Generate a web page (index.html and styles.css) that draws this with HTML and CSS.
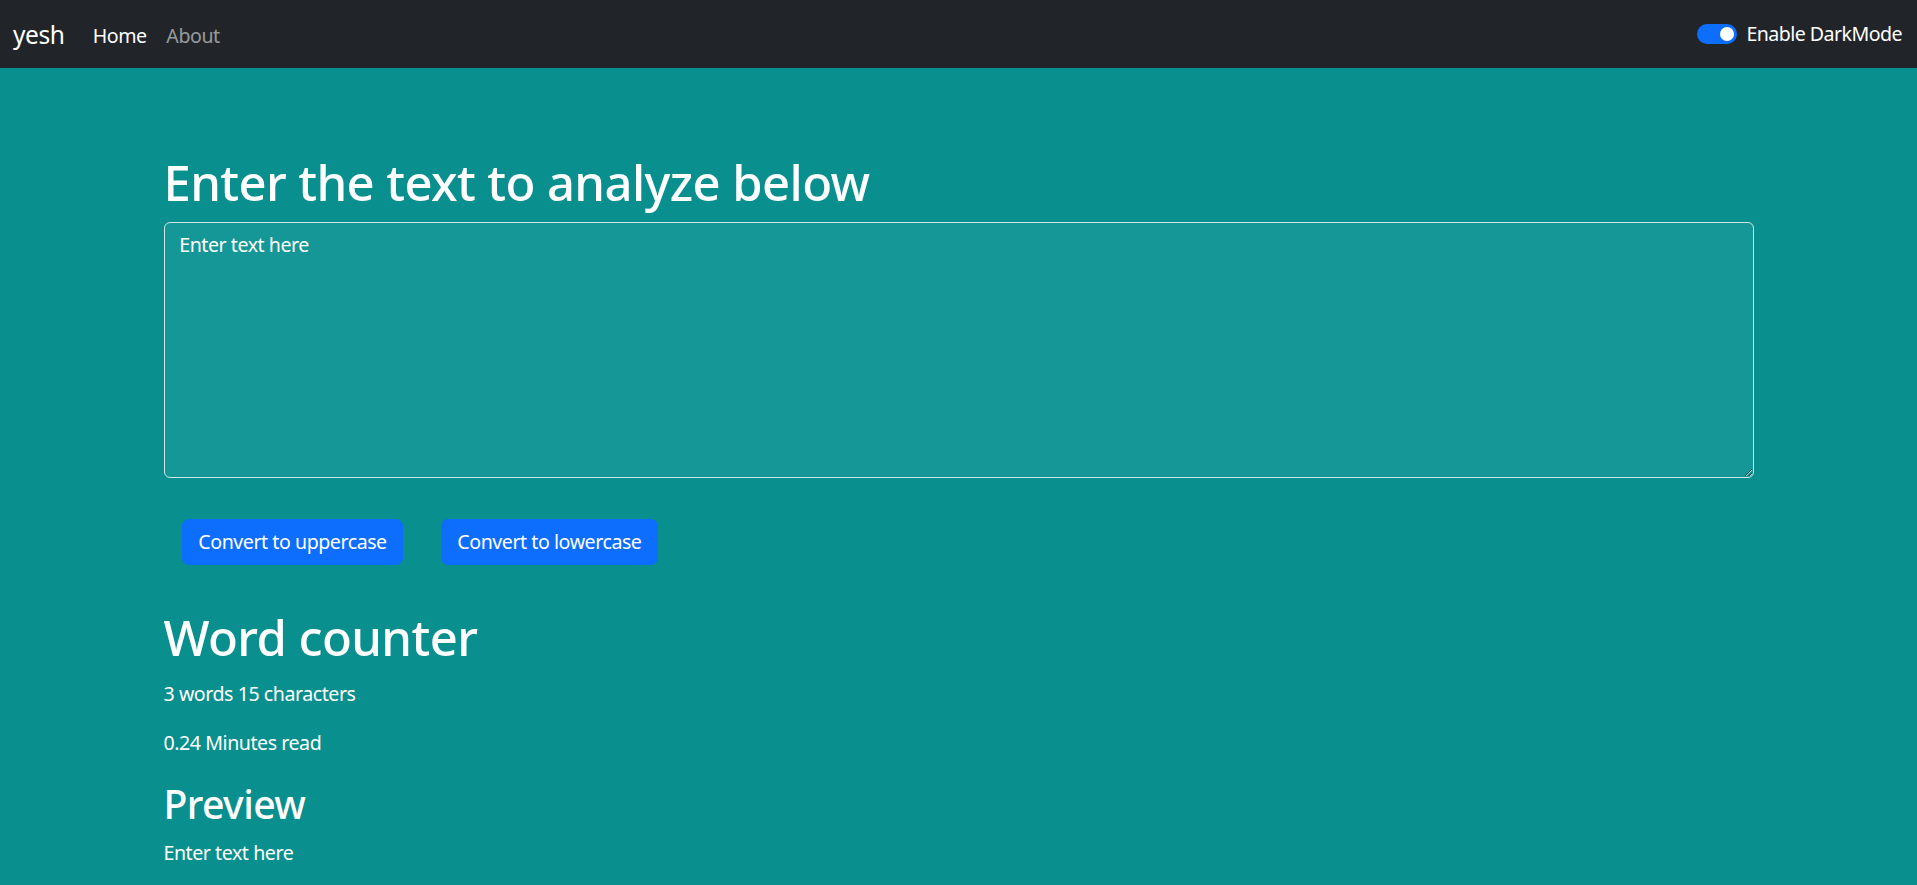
FILE: index.html
```html
<!DOCTYPE html>
<html lang="en">
<head>
<meta charset="utf-8">
<title>TextUtils</title>
<link rel="stylesheet" href="styles.css">
</head>
<body>
<nav class="navbar">
  <div class="nav-left">
    <a class="brand" href="#">yesh</a>
    <a class="nav-link active" href="#">Home</a>
    <a class="nav-link" href="#">About</a>
  </div>
  <div class="switch">
    <span class="switch-track"><span class="switch-knob"></span></span>
    <label class="switch-label">Enable DarkMode</label>
  </div>
</nav>
<main class="container">
  <h1 class="title">Enter the text to analyze below</h1>
  <textarea class="text-box" placeholder="Enter text here"></textarea>
  <div class="actions">
    <button class="btn">Convert to uppercase</button>
    <button class="btn">Convert to lowercase</button>
  </div>
  <section class="summary">
    <h1 class="title title-sm">Word counter</h1>
    <p class="stat">3 words 15 characters</p>
    <p class="stat">0.24 Minutes read</p>
    <h2 class="subtitle">Preview</h2>
    <p class="stat">Enter text here</p>
  </section>
</main>
</body>
</html>
```
FILE: styles.css
```css
* { box-sizing: border-box; }
html, body { margin: 0; padding: 0; }
body {
  background: #0a8f8f;
  color: #fff;
  font-family: "Noto Sans", "Open Sans", sans-serif;
  font-size: 19.6px;
  line-height: 1.5;
  letter-spacing: -0.45px;
}
.navbar {
  height: 68px;
  background: #212529;
  display: flex;
  align-items: center;
  justify-content: space-between;
  padding: 0 15px;
}
.nav-left { display: flex; align-items: center; padding-top: 3px; }
.brand {
  color: #fff;
  text-decoration: none;
  font-size: 24.5px;
  margin-right: 18.6px;
  margin-left: -2px;
}
.nav-link {
  color: rgba(255,255,255,0.55);
  text-decoration: none;
  padding: 0 9.8px;
  font-size: 19.6px;
}
.nav-link.active { color: #fff; }
.switch { display: flex; align-items: center; gap: 9px; }
.switch-track {
  width: 40px;
  height: 20px;
  border-radius: 10px;
  background: #0d6efd;
  display: flex;
  align-items: center;
  justify-content: flex-end;
  padding-right: 3px;
}
.switch-knob {
  width: 14px;
  height: 14px;
  border-radius: 50%;
  background: #fff;
}
.switch-label { color: #fff; font-size: 19.6px; letter-spacing: -0.55px; }
.container {
  max-width: 1617px;
  margin: 0 auto;
  padding: 85px 13.5px 0;
}
.title {
  font-size: 49px;
  font-weight: 500;
  line-height: 1.2;
  letter-spacing: -0.6px;
  margin: 0 0 9.8px;
}
.title-sm { margin-bottom: 12.5px; }
.subtitle {
  font-size: 39.2px;
  font-weight: 500;
  line-height: 1.2;
  letter-spacing: -0.6px;
  padding-top: 3px;
  margin: 0 0 11px;
}
.text-box {
  display: block;
  width: 100%;
  height: 256px;
  padding: 7.35px 14.7px;
  font: inherit;
  font-size: 19.6px;
  line-height: 1.5;
  letter-spacing: -0.45px;
  color: #fff;
  background: #159797;
  border: 1px solid #cfe6e6;
  border-radius: 6px;
  resize: vertical;
}
.text-box::placeholder { color: #fff; opacity: 1; }
.actions {
  display: flex;
  gap: 38px;
  padding: 41px 0 0 18.5px;
}
.btn {
  font: inherit;
  font-size: 19.6px;
  line-height: 1.5;
  letter-spacing: -0.45px;
  color: #fff;
  background: #0d6efd;
  border: 1px solid #0d6efd;
  border-radius: 7px;
  padding: 7.35px 15.3px;
}
.summary { padding-top: 43.5px; }
.stat { margin: 0 0 19.6px; }
```
